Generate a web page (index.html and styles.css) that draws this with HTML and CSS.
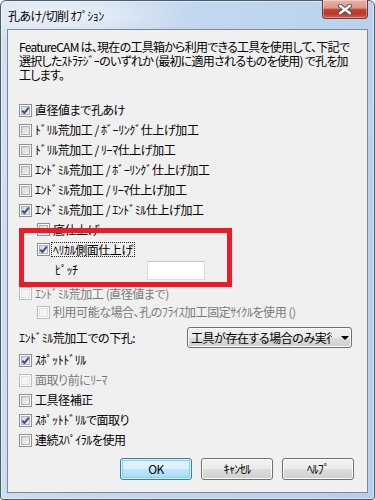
FILE: index.html
```html
<!DOCTYPE html>
<html lang="ja">
<head>
  <meta charset="UTF-8">
  <meta name="viewport" content="width=device-width, initial-scale=1.0">
  <title>孔あけ/切削 ｵﾌﾟｼｮﾝ</title>

  <!-- Estilos -->
  <link rel="stylesheet" href="styles.css">
</head>

<body>
<div class="window">

  <!-- Barra de titulo -->
  <div class="titlebar">
    <span class="title">孔あけ/切削 ｵﾌﾟｼｮﾝ</span>
    <span class="close">
      <svg width="16" height="11" viewBox="0 0 16 11">
        <path d="M3 1.8 L13 9.2 M13 1.8 L3 9.2" stroke="#4e4a4c" stroke-width="4.2" stroke-linecap="round"/>
        <path d="M3 1.8 L13 9.2 M13 1.8 L3 9.2" stroke="#fff" stroke-width="2.4" stroke-linecap="round"/>
      </svg>
    </span>
  </div>

  <div class="client">
    <p class="intro">FeatureCAM は、現在の工具箱から利用できる工具を使用して、下記で<br>選択したｽﾄﾗﾃｼﾞｰのいずれか (最初に適用されるものを使用) で孔を加<br>工します。</p>

    <div class="options">
      <div class="row"><span class="cb on"><svg viewBox="0 0 11 11"><path d="M2.3 5.6 L4.4 8 L8.8 2.6" /></svg></span>直径値まで孔あけ</div>
      <div class="row"><span class="cb"></span>ﾄﾞﾘﾙ荒加工 / ﾎﾞｰﾘﾝｸﾞ仕上げ加工</div>
      <div class="row"><span class="cb"></span>ﾄﾞﾘﾙ荒加工 / ﾘｰﾏ仕上げ加工</div>
      <div class="row"><span class="cb"></span>ｴﾝﾄﾞﾐﾙ荒加工 / ﾎﾞｰﾘﾝｸﾞ仕上げ加工</div>
      <div class="row"><span class="cb"></span>ｴﾝﾄﾞﾐﾙ荒加工 / ﾘｰﾏ仕上げ加工</div>
      <div class="row"><span class="cb on"><svg viewBox="0 0 11 11"><path d="M2.3 5.6 L4.4 8 L8.8 2.6" /></svg></span>ｴﾝﾄﾞﾐﾙ荒加工 / ｴﾝﾄﾞﾐﾙ仕上げ加工</div>
      <div class="row sub h19"><span class="cb"></span>底仕上げ</div>
      <div class="row sub"><span class="cb on"><svg viewBox="0 0 11 11"><path d="M2.3 5.6 L4.4 8 L8.8 2.6" /></svg></span><span class="focus">ﾍﾘｶﾙ側面仕上げ</span></div>
      <div class="row pitch-row">
        <span class="pitch-label">ﾋﾟｯﾁ</span>
        <span class="textbox"></span>
      </div>
      <div class="row h19 disabled"><span class="cb"></span>ｴﾝﾄﾞﾐﾙ荒加工 (直径値まで)</div>
      <div class="row sub h18 disabled"><span class="cb"></span>利用可能な場合、孔のﾌﾗｲｽ加工固定ｻｲｸﾙを使用 ()</div>

      <div class="row combo-row">
        <span>ｴﾝﾄﾞﾐﾙ荒加工での下孔:</span>
        <div class="combo">
          <span class="combo-text">工具が存在する場合のみ実行</span>
          <span class="arrow"></span>
        </div>
      </div>

      <div class="row spot"><span class="cb on"><svg viewBox="0 0 11 11"><path d="M2.3 5.6 L4.4 8 L8.8 2.6" /></svg></span>ｽﾎﾟｯﾄﾄﾞﾘﾙ</div>
      <div class="row disabled"><span class="cb"></span>面取り前にﾘｰﾏ</div>
      <div class="row"><span class="cb"></span>工具径補正</div>
      <div class="row"><span class="cb on"><svg viewBox="0 0 11 11"><path d="M2.3 5.6 L4.4 8 L8.8 2.6" /></svg></span>ｽﾎﾟｯﾄﾄﾞﾘﾙで面取り</div>
      <div class="row"><span class="cb"></span>連続ｽﾊﾟｲﾗﾙを使用</div>
    </div>

    <!-- Botones -->
    <div class="buttons">
      <button class="btn default">OK</button>
      <button class="btn">ｷｬﾝｾﾙ</button>
      <button class="btn">ﾍﾙﾌﾟ</button>
    </div>
  </div>

  <!-- Recuadro rojo de la captura -->
  <div class="callout"></div>
</div>
</body>
</html>
```

FILE: styles.css
```css
body {
  margin: 0;
  font-family: "Noto Sans CJK JP", sans-serif;
  font-size: 12px;
  line-height: 14px;
  letter-spacing: -0.6px;
  font-feature-settings: "palt";
  color: #000;
}

.window {
  position: relative;
  width: 375px;
  height: 500px;
  box-sizing: border-box;
  border: 1px solid #4f5c6b;
  border-radius: 6px 6px 3px 3px;
  padding: 0 6px 6px 6px;
  display: flex;
  flex-direction: column;
  background:
    radial-gradient(ellipse 130px 26px at 60px 14px, rgba(255,255,255,.65), rgba(255,255,255,0)),
    linear-gradient(100deg, #d4e1ef 0%, #c3d8ee 40%, #b3cfee 100%);
  box-shadow: inset 0 0 0 1px rgba(255,255,255,.45);
}

/* Barra de titulo */
.titlebar {
  height: 28px;
  display: flex;
  align-items: flex-start;
}

.title {
  padding-left: 1px;
  margin-top: 8px;
}

.close {
  margin-left: auto;
  margin-top: -1px;
  width: 46px;
  height: 19px;
  box-sizing: border-box;
  border: 1px solid #6b3a36;
  border-top: none;
  border-radius: 0 0 4px 4px;
  display: flex;
  align-items: center;
  justify-content: center;
  background: linear-gradient(#eab0a6 0%, #dc978b 45%, #c44634 52%, #b8382a 75%, #d5603f 100%);
  box-shadow: inset 0 0 0 1px rgba(255,255,255,.35);
}

.close svg {
  display: block;
}

/* Area de cliente */
.client {
  flex: 1;
  border: 1px solid #7b8a9b;
  background: #f0f0f0;
  padding: 10px 13px 0 11px;
  display: flex;
  flex-direction: column;
}

.intro {
  margin: 0;
  white-space: nowrap;
  letter-spacing: -0.75px;
}

.options {
  margin-top: 18px;
  letter-spacing: -0.45px;
}

.row {
  display: flex;
  align-items: center;
  height: 20px;
  white-space: nowrap;
}

.row.sub { padding-left: 18px; }
.row.h19 { height: 19px; }
.row.h18 { height: 18px; }

.disabled { color: #7a7a7a; }

/* Casillas */
.cb {
  flex: none;
  width: 13px;
  height: 13px;
  box-sizing: border-box;
  margin-right: 3px;
  border: 1px solid #8e8f8f;
  background: linear-gradient(135deg, #cfd3d9 0%, #f7f7f7 100%);
  box-shadow: inset 0 0 0 1px #fbfbfb, inset 0 0 0 2px #aeb3b9;
}

.cb svg {
  display: block;
  width: 11px;
  height: 11px;
}

.cb svg path {
  fill: none;
  stroke: #3a5387;
  stroke-width: 2;
  stroke-linejoin: round;
}

.disabled .cb {
  border-color: #bcbcbc;
  background: #f4f4f4;
  box-shadow: inset 0 0 0 1px #fff, inset 0 0 0 2px #e0e0e0;
}

.focus {
  border: 1px dotted #222;
  padding: 0 1px;
  line-height: 13px;
  margin-left: -2px;
}

/* Paso */
.pitch-row {
  height: 22px;
  margin-bottom: 3px;
  padding-left: 36px;
}

.pitch-label {
  width: 92px;
}

.textbox {
  width: 58px;
  height: 19px;
  box-sizing: border-box;
  background: #fff;
  border: 1px solid #dcdde3;
  border-top-color: #c4c6cc;
}

/* Combo */
.combo-row {
  height: 21px;
  margin-top: 6px;
}

.combo {
  margin-left: auto;
  margin-right: 2px;
  width: 165px;
  height: 21px;
  box-sizing: border-box;
  border: 1px solid #707070;
  border-radius: 3px;
  background: linear-gradient(#f2f2f2 0%, #ebebeb 50%, #dddddd 51%, #cfcfcf 100%);
  box-shadow: inset 0 0 0 1px #fbfbfb;
  display: flex;
  align-items: center;
}

.combo-text {
  width: 141px;
  padding-left: 3px;
  overflow: hidden;
}

.arrow {
  margin-left: 9px;
  border-left: 4px solid transparent;
  border-right: 4px solid transparent;
  border-top: 4px solid #000;
}

.row.spot { margin-top: 2px; }

/* Botones */
.buttons {
  display: flex;
  justify-content: flex-end;
  gap: 9px;
  margin-top: 8px;
}

.btn {
  width: 72px;
  height: 22px;
  padding: 0;
  font: inherit;
  letter-spacing: inherit;
  font-feature-settings: "palt";
  color: #000;
  border: 1px solid #707070;
  border-radius: 3px;
  background: linear-gradient(#f2f2f2 0%, #ebebeb 50%, #dddddd 51%, #cfcfcf 100%);
  box-shadow: inset 0 0 0 1px #fcfcfc;
}

.btn.default {
  border-color: #3c7fb1;
  background: linear-gradient(#eaf6fd 0%, #d9f0fc 50%, #bee6fd 51%, #a7d9f5 100%);
  box-shadow: inset 0 0 0 1px #d6f0fb, inset 0 0 0 2px #8fd1f0;
}

/* Recuadro rojo */
.callout {
  position: absolute;
  left: 18px;
  top: 227px;
  width: 213px;
  height: 59px;
  box-sizing: border-box;
  border: 5px solid #ed1c24;
}
```
